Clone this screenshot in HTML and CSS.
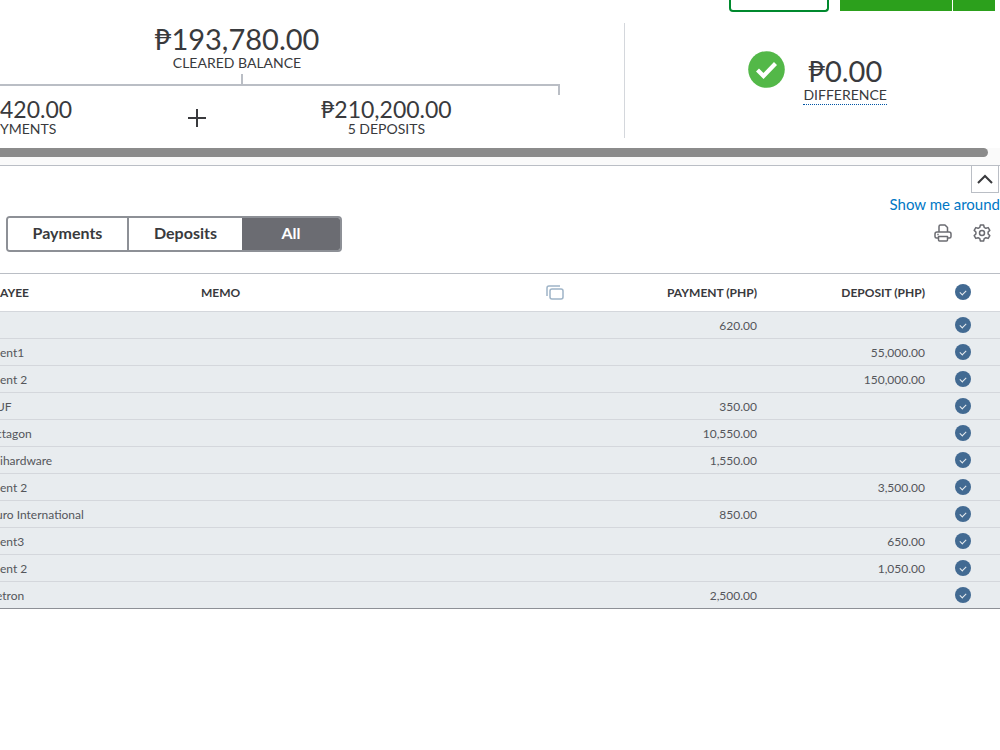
FILE: index.html
```
<!DOCTYPE html>
<html lang="en">
<head>
<meta charset="UTF-8" />
<meta name="viewport" content="width=device-width, initial-scale=1" />
<title>Reconcile</title>
<link rel="stylesheet" href="styles.css">
</head>
<body>

<header class="actions">
  <button class="btn-outline" aria-label="Edit"></button>
  <div class="btn-split">
    <button class="btn-main" aria-label="Finish"></button>
    <button class="btn-more" aria-label="More options"></button>
  </div>
</header>

<section class="summary">
  <div class="balance">
    <div class="cleared">
      <div class="amount">₱193,780.00</div>
      <div class="label">CLEARED BALANCE</div>
      <div class="stem"></div>
    </div>
    <div class="bracket"></div>
    <div class="parts">
      <div class="payments">
        <div class="amount-sm">420.00</div>
        <div class="label">YMENTS</div>
      </div>
      <svg class="plus" width="18" height="18" viewBox="0 0 18 18"><path d="M9 0v18M0 9h18" stroke="#393a3d" stroke-width="2"/></svg>
      <div class="deposits">
        <div class="amount-sm">₱210,200.00</div>
        <div class="label">5 DEPOSITS</div>
      </div>
    </div>
  </div>
  <div class="difference">
    <svg width="37" height="37" viewBox="0 0 37 37"><circle cx="18.5" cy="18.5" r="18.3" fill="#53b848"/><path d="M9.500 19l6 6L27.500 12.500" fill="none" stroke="#fff" stroke-width="4.200"/></svg>
    <div class="diff-text">
      <div class="amount">₱0.00</div>
      <div class="label dotted">DIFFERENCE</div>
    </div>
  </div>
</section>

<div class="scrollbar"><div class="thumb"></div></div>

<div class="fold">
  <button class="fold-btn" aria-label="Collapse summary">
    <svg width="16" height="10" viewBox="0 0 16 10"><path d="M1 9l7-7 7 7" fill="none" stroke="#393a3d" stroke-width="2"/></svg>
  </button>
</div>

<div class="tour"><a href="#">Show me around</a></div>

<div class="toolbar">
  <div class="tabs">
    <button class="tab tab-payments">Payments</button>
    <button class="tab tab-deposits">Deposits</button>
    <button class="tab tab-all active">All</button>
  </div>
  <div class="tools">
    <button class="icon-btn" aria-label="Print">
      <svg width="18" height="18" viewBox="0 0 18 18" fill="none" stroke="#6b6c72" stroke-width="1.5" stroke-linejoin="round"><path d="M5 8V2.500Q5 1 6.500 1H11l2.500 2.500V8"/><path d="M4.500 14H2.500Q1 14 1 12.500V10Q1 8 3 8h12q2 0 2 2v2.500q0 1.500-1.500 1.500h-2"/><path d="M4.500 12.500h9V16q0 1-1 1h-7q-1 0-1-1z"/><path d="M3.300 10.500h1.400"/></svg>
    </button>
    <button class="icon-btn" aria-label="Settings">
      <svg width="18" height="18" viewBox="0 0 18 18" fill="none" stroke="#6b6c72" stroke-width="1.500" stroke-linejoin="round"><path d="M7.400 1h3.200l.6 2.300 1.700 1 2.300-.7 1.600 2.800L15.100 8v2l1.700 1.600-1.600 2.800-2.300-.7-1.700 1-.6 2.300H7.400l-.6-2.300-1.700-1-2.300.7-1.600-2.800L2.900 10V8L1.200 6.400l1.600-2.800 2.300.7 1.700-1z"/><circle cx="9" cy="9" r="2.500"/></svg>
    </button>
  </div>
</div>

<table class="register">
  <colgroup>
    <col class="col-payee"><col><col class="col-copy"><col class="col-payment"><col class="col-deposit"><col class="col-check">
  </colgroup>
  <thead>
    <tr>
      <th>AYEE</th>
      <th class="memo">MEMO</th>
      <th class="copy"><svg width="18" height="15" viewBox="0 0 18 15" fill="none" stroke="#9fb4c7" stroke-width="1.500"><rect x="4" y="4" width="13" height="10" rx="2"/><path d="M1 11V3q0-2 2-2h11"/></svg></th>
      <th class="num">PAYMENT (PHP)</th>
      <th class="num">DEPOSIT (PHP)</th>
      <th class="check"><input type="checkbox" aria-label="Select all" checked></th>
    </tr>
  </thead>
  <tbody id="rows"></tbody>
</table>

<script>
  const rows = [
    { payee: "", payment: "620.00", deposit: "" },
    { payee: "ent1", payment: "", deposit: "55,000.00" },
    { payee: "ent 2", payment: "", deposit: "150,000.00" },
    { payee: "UF", payment: "350.00", deposit: "", cut: true },
    { payee: "ctagon", payment: "10,550.00", deposit: "", cut: true },
    { payee: "ihardware", payment: "1,550.00", deposit: "" },
    { payee: "ent 2", payment: "", deposit: "3,500.00" },
    { payee: "uro International", payment: "850.00", deposit: "", cut: true },
    { payee: "ent3", payment: "", deposit: "650.00" },
    { payee: "ent 2", payment: "", deposit: "1,050.00" },
    { payee: "etron", payment: "2,500.00", deposit: "", cut: true }
  ];

  document.getElementById('rows').innerHTML = rows.map((row, i) => `
    <tr>
      <td class="${row.cut ? 'cut' : ''}">${row.payee}</td>
      <td></td>
      <td></td>
      <td class="num">${row.payment}</td>
      <td class="num">${row.deposit}</td>
      <td class="check"><input type="checkbox" aria-label="Row ${i + 1}" checked></td>
    </tr>
  `).join('');
</script>

</body>
</html>
```
FILE: styles.css
```
* {
  box-sizing: border-box;
}
body {
  font-family: Lato, "Liberation Sans", sans-serif;
  margin: 0;
  background: #fff;
  color: #393a3d;
  overflow-x: hidden;
}
button {
  font-family: inherit;
  color: inherit;
  padding: 0;
  cursor: pointer;
}
svg {
  display: block;
}
.actions {
  display: flex;
  justify-content: flex-end;
  gap: 11px;
  height: 12px;
  padding-right: 5px;
}
.btn-outline {
  width: 100px;
  height: 12px;
  background: #fff;
  border: 2px solid #00892e;
  border-top: none;
  border-radius: 0 0 4px 4px;
}
.btn-split {
  display: flex;
  gap: 1px;
  height: 11px;
}
.btn-main,
.btn-more {
  background: #2ca01c;
  border: none;
}
.btn-main {
  width: 112px;
}
.btn-more {
  width: 42px;
}

/* balance summary */
.summary {
  display: flex;
  padding: 11px 0 10px;
}
.balance {
  flex: 5;
  border-right: 1px solid #d4d7dc;
}
.cleared {
  display: flex;
  flex-direction: column;
  align-items: center;
  width: 474px;
}
.amount {
  font-size: 29px;
  line-height: 32px;
}
.amount-sm {
  font-size: 23px;
  line-height: 24px;
}
.label {
  font-size: 14px;
  line-height: 16px;
}
.stem {
  width: 2px;
  height: 10px;
  margin: 3px 0 0 10px;
  background: #babec5;
}
.bracket {
  width: 560px;
  height: 11px;
  border: 2px solid #babec5;
  border-width: 2px 2px 0 0;
}
.parts {
  display: flex;
  align-items: center;
  height: 43px;
}
.payments {
  width: 71px;
  text-align: right;
}
.payments .label {
  padding-right: 16px;
}
.plus {
  margin: 2px 115px 0 117px;
}
.deposits {
  text-align: center;
}
.difference {
  flex: 3;
  display: flex;
  align-items: flex-start;
  justify-content: center;
  gap: 18px;
  padding-top: 28px;
}
.diff-text {
  padding-top: 4px;
  margin-right: -10px;
  text-align: center;
}
.dotted {
  height: 18px;
  border-bottom: 1px dotted #0055a5;
}
.scrollbar {
  height: 17px;
  background: #fafafa;
}
.thumb {
  height: 9px;
  margin-right: 12px;
  background: #8b8b8b;
  border-radius: 0 5px 5px 0;
}

/* toolbar */
.fold {
  display: flex;
  justify-content: flex-end;
  height: 28px;
  padding-right: 1px;
  border-top: 1px solid #babec5;
}
.fold-btn {
  display: flex;
  align-items: center;
  justify-content: center;
  width: 28px;
  height: 27px;
  background: #fff;
  border: 1px solid #babec5;
  border-top: none;
}
.tour {
  text-align: right;
  font-size: 15px;
  line-height: 23px;
}
.tour a {
  color: #0077c5;
  text-decoration: none;
}
.toolbar {
  display: flex;
  justify-content: space-between;
  padding: 0 9px 21px 6px;
}
.tabs {
  display: flex;
  height: 36px;
  border: 2px solid #8d9096;
  border-radius: 4px;
  overflow: hidden;
}
.tab {
  padding-bottom: 3px;
  font-size: 16px;
  font-weight: bold;
  background: #fff;
  border: none;
}
.tab-payments {
  width: 121px;
  border-right: 2px solid #8d9096;
}
.tab-deposits {
  width: 113px;
}
.tab-all {
  width: 98px;
}
.tab.active {
  background: #6b6c72;
  color: #fff;
}
.tools {
  display: flex;
  gap: 21px;
  padding-top: 8px;
}
.icon-btn {
  width: 18px;
  height: 18px;
  background: none;
  border: none;
}

/* register table */
.register {
  width: 100%;
  table-layout: fixed;
  border-collapse: collapse;
  font-size: 12px;
  border-top: 1px solid #babec5;
  border-bottom: 1px solid #8d9096;
}
.col-payee {
  width: 193px;
}
.col-copy {
  width: 40px;
}
.col-payment {
  width: 190px;
}
.col-deposit {
  width: 168px;
}
.col-check {
  width: 67px;
}
.register th,
.register td {
  padding: 0;
  text-align: left;
}
.register th {
  height: 38px;
  padding-bottom: 1px;
}
.register td {
  height: 27px;
  background: #e8ecef;
  border-top: 1px solid #d4d7dc;
  color: #54565b;
}
.register .cut {
  text-indent: -4px;
}
.register .memo {
  padding-left: 8px;
}
.register .copy {
  padding-left: 11px;
}
.register .num {
  padding-right: 8px;
  text-align: right;
}
.register .check {
  padding-left: 22px;
}
.check input {
  display: grid;
  place-items: center;
  appearance: none;
  width: 16px;
  height: 16px;
  margin: 0;
  background: #426a92;
  border-radius: 50%;
}
.check input:checked::after {
  content: "";
  width: 5px;
  height: 3px;
  border: solid #e8ecef;
  border-width: 0 0 1px 1px;
  transform: rotate(-45deg);
}
```
